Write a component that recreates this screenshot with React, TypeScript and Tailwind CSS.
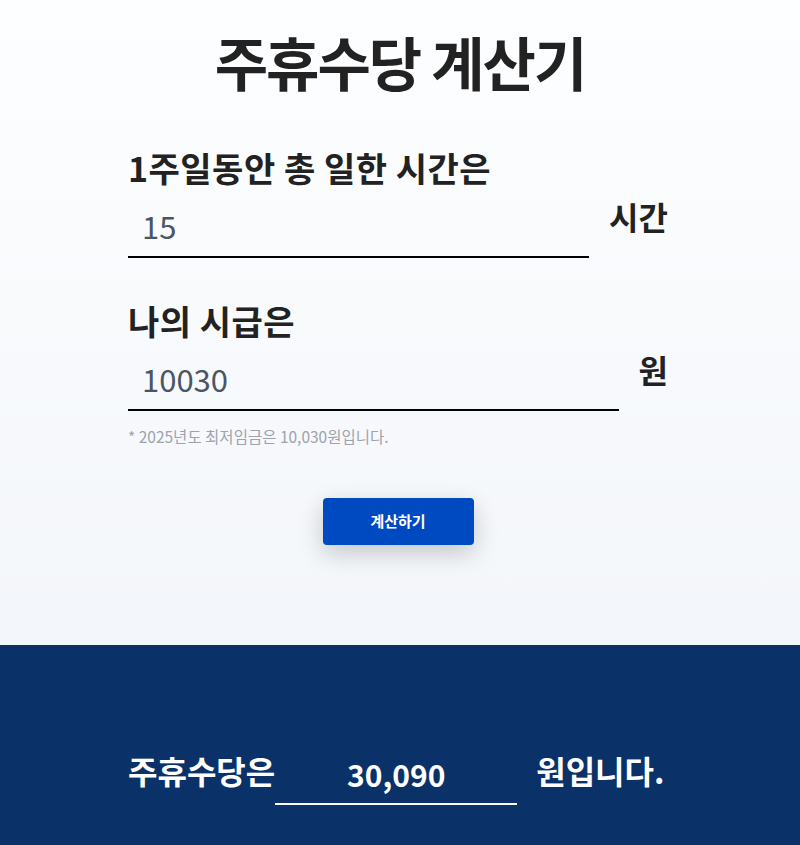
const kr = "font-['Noto_Sans_CJK_KR','Noto_Sans',sans-serif]";

function Field({ label, value, unit }: { label: string; value: string; unit: string }) {
  return (
    <div>
      <p className="text-[34px] leading-[40px] tracking-[0.5px] font-bold text-[#222]">{label}</p>
      <div className="mt-[10px] flex items-start gap-[20px]">
        <input
          type="text"
          defaultValue={value}
          className="flex-1 min-w-0 h-[60px] pl-[14px] pb-[4px] text-[31px] text-[#4b5563] bg-transparent border-b-2 border-black outline-none"
        />
        <span className="text-[32px] leading-[36px] font-bold text-[#222]">{unit}</span>
      </div>
    </div>
  );
}

export default function App() {
  return (
    <div className={`min-h-[845px] flex flex-col ${kr}`}>
      <section className="h-[645px] bg-gradient-to-b from-[#fdfeff] to-[#f3f6fa] pt-[23px]">
        <h1 className="text-center text-[58px] leading-[76px] tracking-[-2px] font-bold text-[#222]">주휴수당 계산기</h1>
        <div className="ml-[128px] w-[540px] mt-[49px] flex flex-col">
          <Field label="1주일동안 총 일한 시간은" value="15" unit="시간" />
          <div className="mt-[43px]">
            <Field label="나의 시급은" value="10030" unit="원" />
            <p className="mt-[13px] text-[15.5px] leading-[24px] text-[#9ca3af]">* 2025년도 최저임금은 10,030원입니다.</p>
          </div>
          <div className="mt-[50px] flex justify-center">
            <button className="w-[151px] h-[47px] rounded-[4px] bg-[#004ac1] text-white text-[15px] font-bold shadow-[0_8px_24px_rgba(0,0,0,0.2)]">
              계산하기
            </button>
          </div>
        </div>
      </section>
      <section className="flex-1 bg-[#0b3169] pt-[103px]">
        <div className="ml-[128px] w-[540px] flex items-start text-white font-bold">
          <span className="text-[32px] leading-[44px]">주휴수당은</span>
          <div className="w-[242px] h-[57px] pt-[4px] border-b-2 border-white text-center text-[30px] leading-[44px]">30,090</div>
          <span className="ml-[19px] text-[32px] leading-[44px]">원입니다.</span>
        </div>
      </section>
    </div>
  );
}
